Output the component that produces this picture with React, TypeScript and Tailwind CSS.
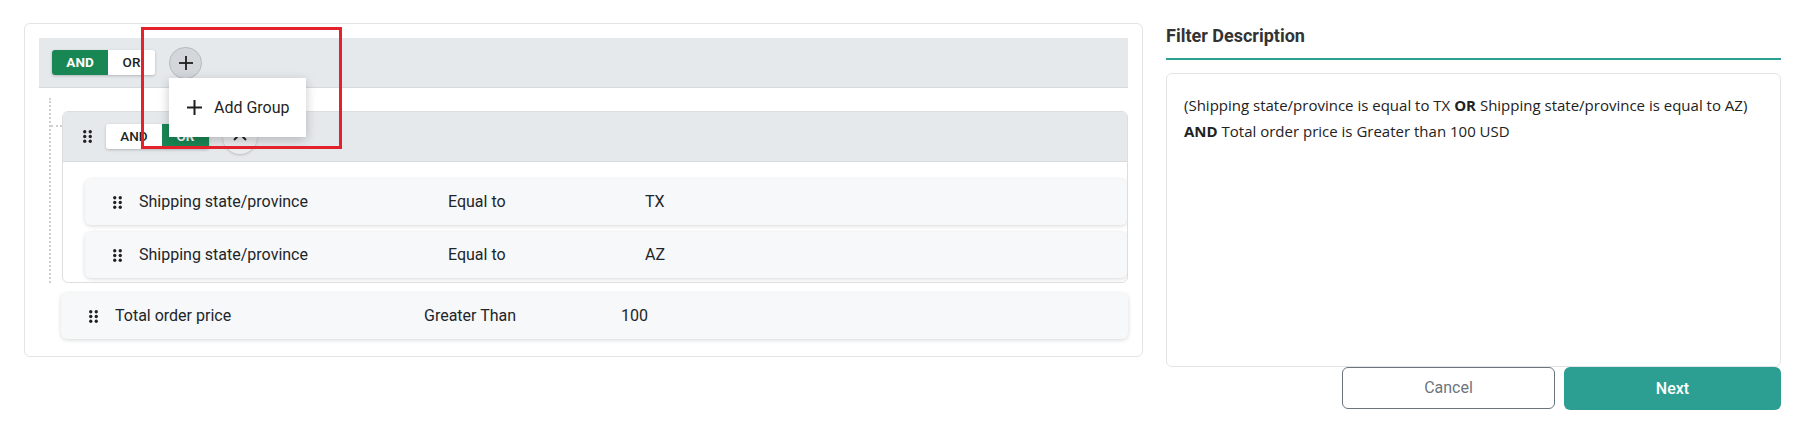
import React from "react";

function DragDots({ className = "" }: { className?: string }) {
  return (
    <svg width="9" height="13" viewBox="0 0 9 13" className={className}>
      {[1.75, 6.5, 11.25].map((y) =>
        [1.75, 7.25].map((x) => <circle key={`${x}-${y}`} cx={x} cy={y} r="1.65" fill="#222" />)
      )}
    </svg>
  );
}

function PlusIcon({ size = 14, stroke = 1.8 }: { size?: number; stroke?: number }) {
  return (
    <svg width={size} height={size} viewBox={`0 0 ${size} ${size}`}>
      <line x1={size / 2} y1="0" x2={size / 2} y2={size} stroke="#1f1f1f" strokeWidth={stroke} />
      <line x1="0" y1={size / 2} x2={size} y2={size / 2} stroke="#1f1f1f" strokeWidth={stroke} />
    </svg>
  );
}

function Toggle({ active }: { active: "AND" | "OR" }) {
  const on = "bg-[#198754] text-white font-bold";
  const off = "bg-white text-[#1f1f1f] font-medium";
  return (
    <div className="flex h-[25px] w-[103px] overflow-hidden rounded-[3px] text-[13.5px] shadow-[0_1px_3px_rgba(0,0,0,0.22)]">
      <div className={`flex w-[56px] items-center justify-center ${active === "AND" ? on : off}`}>AND</div>
      <div className={`flex w-[47px] items-center justify-center ${active === "OR" ? on : off}`}>OR</div>
    </div>
  );
}

function Row({ field, op, value, className = "" }: { field: string; op: string; value: string; className?: string }) {
  return (
    <div
      className={`flex h-[46px] items-center rounded-[6px] bg-[#f7f8fa] pl-[28px] text-[16px] text-[#212529] shadow-[0_1px_4px_rgba(0,0,0,0.16)] ${className}`}
    >
      <DragDots />
      <div className="ml-[17px] w-[309px]">{field}</div>
      <div className="w-[197px]">{op}</div>
      <div>{value}</div>
    </div>
  );
}

export default function App() {
  return (
    <div className="flex min-h-[434px] w-[1817px] bg-white pl-[24px] font-['Roboto',sans-serif] text-[#212529]">
      {/* Left card */}
      <div className="mt-[23px] h-[334px] w-[1119px] rounded-[6px] border border-[#e2e4e7] p-[14px]">
        {/* Root group header */}
        <div className="relative z-10 flex h-[50px] items-center gap-[14px] border-b border-[#d6dadd] bg-[#e6e9ec] pl-[13px]">
          <Toggle active="AND" />
          <div className="flex h-[32px] w-[33px] items-center justify-center rounded-full border border-[#b7bbc0] bg-[#d3d6da]">
            <PlusIcon size={14} stroke={1.8} />
          </div>

          {/* Dropdown menu */}
          <div className="absolute left-[130px] top-[40px] flex h-[59px] w-[137px] items-center gap-[12px] bg-white pl-[18px] text-[16px] text-[#1f1f1f] shadow-[0_3px_10px_rgba(0,0,0,0.22)]">
            <PlusIcon size={15} stroke={2} />
            <span>Add Group</span>
          </div>

          {/* Red annotation rectangle */}
          <div className="pointer-events-none absolute left-[102px] top-[-11px] h-[122px] w-[201px] border-[3px] border-[#e3222b]" />
        </div>

        {/* Root group body */}
        <div className="pl-[10px] pt-[10px] pb-[3px]">
          <div className="relative border-l-2 border-dotted border-[#cfcfcf] pl-[11px] pt-[13px]">
            <div className="absolute left-0 top-[27px] w-[11px] border-t-2 border-dotted border-[#cfcfcf]" />
            {/* Inner group */}
            <div className="overflow-hidden rounded-[6px] border border-[#dcdfe2] bg-white">
              <div className="flex h-[50px] items-center gap-[14px] border-b border-[#d6dadd] bg-[#e6e9ec] pl-[20px]">
                <DragDots />
                <Toggle active="OR" />
                <div className="flex h-[34px] w-[34px] items-center justify-center rounded-full bg-[#ebecee] shadow-[0_1px_3px_rgba(0,0,0,0.2)]">
                  <svg width="14" height="8" viewBox="0 0 14 8">
                    <polyline points="1,7 7,1 13,7" fill="none" stroke="#1f1f1f" strokeWidth="1.8" />
                  </svg>
                </div>
              </div>
              <div className="flex flex-col gap-[7px] pl-[22px] pt-[17px] pb-[4px]">
                <Row field="Shipping state/province" op="Equal to" value="TX" />
                <Row field="Shipping state/province" op="Equal to" value="AZ" />
              </div>
            </div>
          </div>
          <Row field="Total order price" op="Greater Than" value="100" className="ml-[12px] mt-[10px]" />
        </div>
      </div>

      {/* Right column */}
      <div className="ml-[23px] flex w-[615px] flex-col">
        <div className="mt-[22px] border-b-2 border-[#2d9f92] pb-[9px] text-[18px] font-bold leading-[27px] text-[#333333]">
          Filter Description
        </div>
        <div className="mt-[13px] h-[294px] rounded-[6px] border border-[#e2e4e7] px-[17px] pt-[18px] font-['Open_Sans',sans-serif] text-[15px] leading-[26px] text-[#222222]">
          <div className="whitespace-nowrap">
            (Shipping state/province is equal to TX <span className="font-bold">OR</span> Shipping state/province is equal to AZ)
          </div>
          <div className="whitespace-nowrap">
            <span className="font-bold">AND</span> Total order price is Greater than 100 USD
          </div>
        </div>
        <div className="flex justify-end gap-[9px]">
          <button className="h-[42px] w-[213px] rounded-[6px] border border-[#6c757d] bg-white text-[16px] text-[#6c757d]">
            Cancel
          </button>
          <button className="h-[43px] w-[217px] rounded-[6px] bg-[#2d9f92] text-[16px] font-medium text-white">
            Next
          </button>
        </div>
      </div>
    </div>
  );
}
